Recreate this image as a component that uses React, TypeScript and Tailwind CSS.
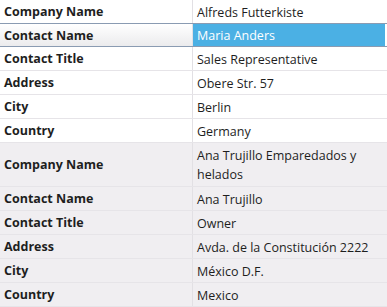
const customers = [
  {
    company: "Alfreds Futterkiste",
    contact: "Maria Anders",
    title: "Sales Representative",
    address: "Obere Str. 57",
    city: "Berlin",
    country: "Germany",
  },
  {
    company: "Ana Trujillo Emparedados y helados",
    contact: "Ana Trujillo",
    title: "Owner",
    address: "Avda. de la Constitución 2222",
    city: "México D.F.",
    country: "Mexico",
  },
];

const fields = [
  { key: "company", label: "Company Name" },
  { key: "contact", label: "Contact Name" },
  { key: "title", label: "Contact Title" },
  { key: "address", label: "Address" },
  { key: "city", label: "City" },
  { key: "country", label: "Country" },
] as const;

export default function App() {
  const selected = { record: 0, field: "contact" };

  return (
    <div className="w-[387px] h-[307px] overflow-hidden bg-white font-['Open_Sans',sans-serif] text-[12.5px] text-[#1e1e1e]">
      {customers.map((c, ri) => (
        <div key={ri} className={ri % 2 === 1 ? "bg-[#f0eef1]" : "bg-white"}>
          {fields.map((f) => {
            const isSel = selected.record === ri && selected.field === f.key;
            const tall = ri === 1 && f.key === "company";
            return (
              <div
                key={f.key}
                className={`grid grid-cols-[193px_1fr] pr-[2px] border-b ${
                  isSel ? "border-t border-t-[#8a9bb2] border-b-[#8a9bb2] -mt-px" : "border-b-[#e6e4e8]"
                } ${tall ? "h-[44px]" : "h-[24px]"}`}
              >
                <div
                  className={`flex items-center pl-[4px] pt-px font-bold whitespace-nowrap border-r border-[#e2e0e4] leading-[18px] ${
                    isSel ? "bg-gradient-to-b from-white to-[#ebebed]" : ""
                  }`}
                >
                  {f.label}
                </div>
                <div
                  className={`flex items-center pl-[4px] pr-[8px] pt-px leading-[19px] ${
                    tall ? "" : "whitespace-nowrap"
                  } ${isSel ? "bg-[#4bb0e4] text-white" : ""}`}
                >
                  {c[f.key]}
                </div>
              </div>
            );
          })}
        </div>
      ))}
    </div>
  );
}
